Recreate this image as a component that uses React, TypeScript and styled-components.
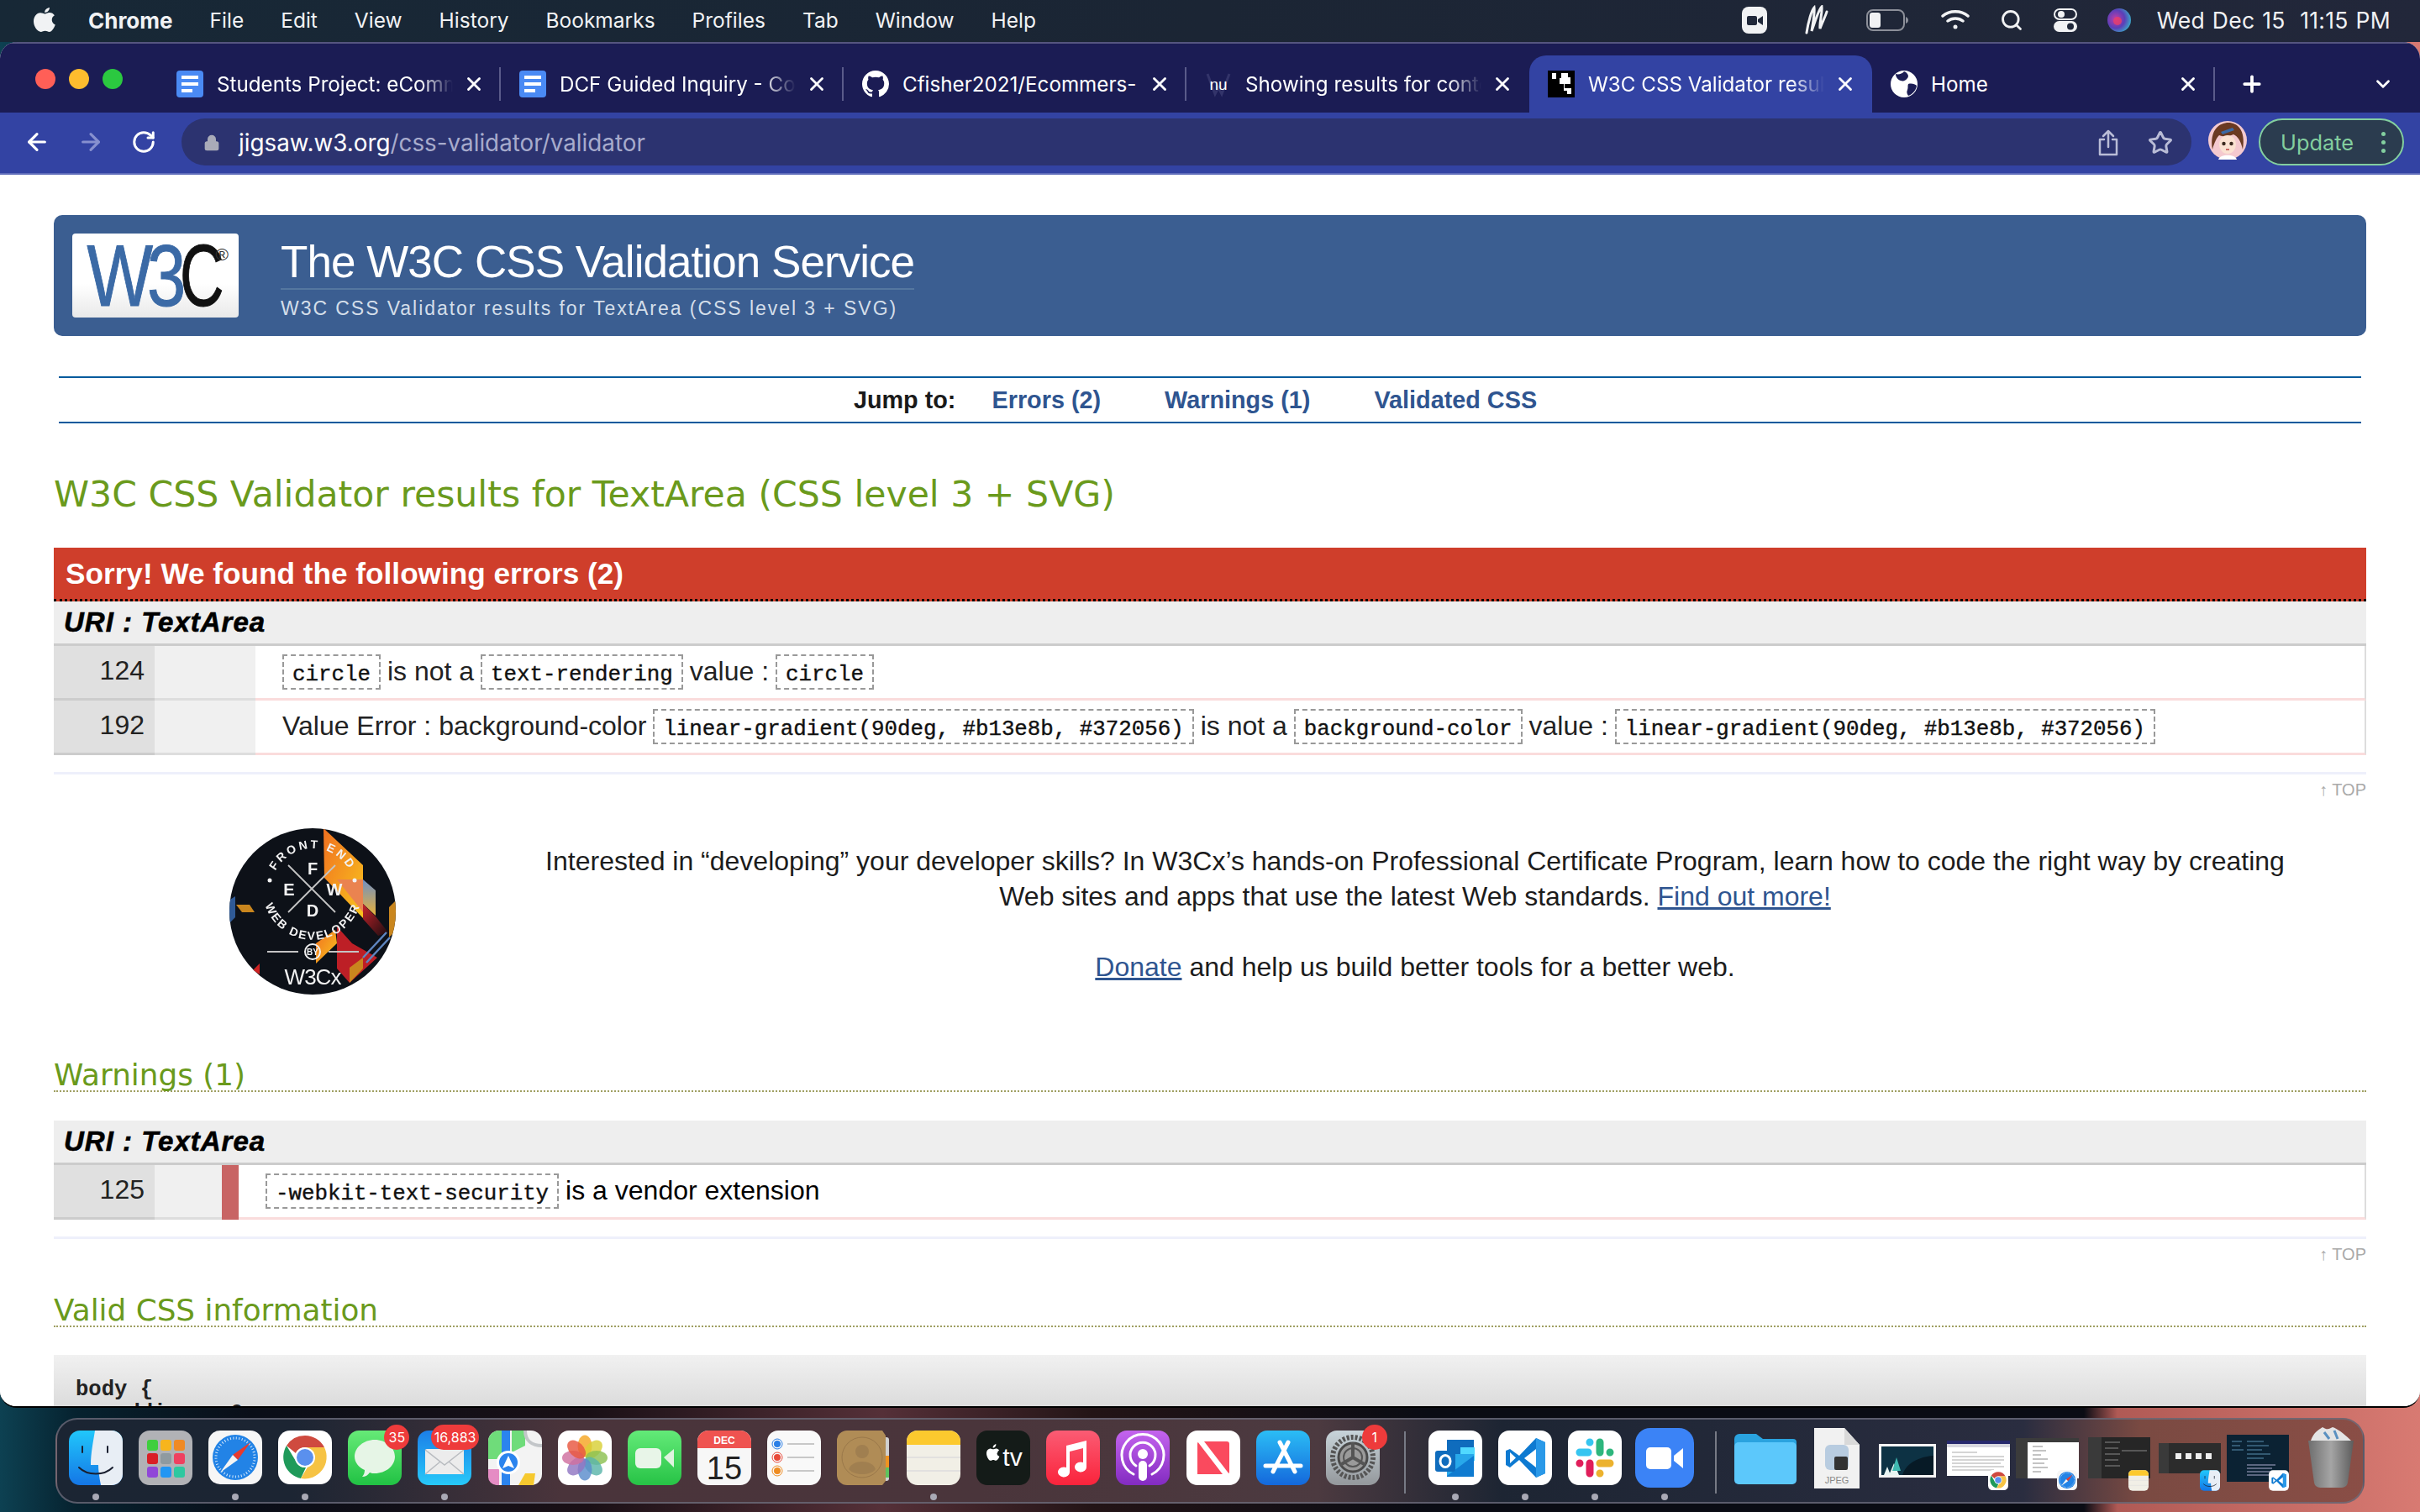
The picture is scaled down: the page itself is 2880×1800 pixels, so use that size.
import React from "react";
import styled, { createGlobalStyle } from "styled-components";
import { ArrowLeft, ArrowRight, RotateCw, Lock, Star, Plus, ChevronDown, X, Search } from "lucide-react";

const Global = createGlobalStyle`
  html, body { margin: 0; padding: 0; background: #111; }
  body { font-family: "Liberation Sans", Arial, sans-serif; }
  * { box-sizing: border-box; }
`;

const Root = styled.div`
  width: 2880px;
  height: 1800px;
  overflow: hidden;
  display: flex;
  flex-direction: column;
  background:
    linear-gradient(90deg, #0d4152 0, #06222f 90px, #0a0e18 300px, #1a1016 700px, #553038 1050px, #231416 1300px, #0a0c14 1700px, #0a0c14 2480px, #b05a55 2520px, #d87a72 2880px);
`;

/* menu bar */
const MenuBar = styled.div`
  height: 50px;
  flex: none;
  display: flex;
  align-items: center;
  padding: 0 35px 2px 39px;
  color: #f1f2f4;
  font-family: Inter, sans-serif;
  font-size: 24.5px;
  background: linear-gradient(90deg, #172836, #1b2534 50%, #22273a);
`;
const MenuItems = styled.div`
  display: flex;
  align-items: center;
  gap: 44px;
  svg { margin-right: -6px; }
`;
const MenuName = styled.span<{ $bold?: boolean }>`
  font-weight: ${p => (p.$bold ? 700 : 400)};
  font-size: ${p => (p.$bold ? "26px" : "inherit")};
`;
const Status = styled.div`
  margin-left: auto;
  display: flex;
  align-items: center;
  gap: 36px;
  & > svg:nth-child(-n + 2) { margin-right: 9px; }
  & > svg:nth-child(3) { margin-right: 3px; }
`;
const Clock = styled.span`
  white-space: pre;
  margin-left: -5px;
  font-size: 26.5px;
  letter-spacing: .3px;
  word-spacing: 1px;
`;

/* browser window */
const Window = styled.div`
  height: 1626px;
  flex: none;
  border-radius: 20px;
  overflow: hidden;
  display: flex;
  flex-direction: column;
  background: #fff;
  border-bottom: 2px solid #000;
`;
const TabStrip = styled.div`
  height: 84px;
  flex: none;
  display: flex;
  align-items: flex-end;
  background: #1b1c54;
  border-top: 2px solid #55557f;
  padding-left: 42px;
`;
const Lights = styled.div`
  display: flex;
  gap: 16px;
  width: 146px;
  flex: none;
  align-self: flex-start;
  padding-top: 30px;
`;
const Light = styled.i<{ $c: string }>`
  width: 24px;
  height: 24px;
  border-radius: 50%;
  background: ${p => p.$c};
`;
const Tab = styled.div<{ $active?: boolean; $sep?: boolean }>`
  width: 408px;
  height: 68px;
  flex: none;
  display: flex;
  align-items: center;
  padding: 0 19px 0 22px;
  gap: 16px;
  color: #fff;
  font-family: Inter, sans-serif;
  font-size: 24.2px;
  position: relative;
  border-radius: 20px 20px 0 0;
  background: ${p => (p.$active ? "#3343a3" : "transparent")};
  ${p =>
    p.$sep
      ? `&::after { content: ""; position: absolute; right: 0; top: 14px; height: 40px; width: 2px; background: #5a5b8a; }`
      : ""}
`;
const TabTitle = styled.span<{ $fade?: boolean }>`
  flex: 1;
  min-width: 0;
  margin-right: -4px;
  white-space: nowrap;
  overflow: hidden;
  ${p => (p.$fade ? "-webkit-mask-image: linear-gradient(90deg, #000 86%, transparent 100%);" : "")}
`;
const NewTab = styled.div`
  display: flex;
  align-items: center;
  height: 68px;
  padding-left: 29px;
  color: #fff;
`;
const TabMenu = styled.div`
  margin-left: auto;
  height: 68px;
  padding-right: 31px;
  display: flex;
  align-items: center;
  color: #fff;
`;
const Toolbar = styled.div`
  height: 74px;
  flex: none;
  display: flex;
  align-items: center;
  padding: 0 18px 2px 28px;
  background: #3343a3;
  border-bottom: 2px solid #5f6cba;
`;
const NavButtons = styled.div`
  display: flex;
  align-items: center;
  gap: 32px;
  width: 188px;
  flex: none;
`;
const Omnibox = styled.div`
  width: 2392px;
  height: 56px;
  flex: none;
  display: flex;
  align-items: center;
  padding: 2px 22px 0 26px;
  border-radius: 28px;
  background: #2c3370;
  font-family: Inter, sans-serif;
  font-size: 27.8px;
  color: #a7abcc;
`;
const Host = styled.span`
  margin-left: 22px;
  color: #fff;
`;
const OmniIcons = styled.div`
  margin-left: auto;
  display: flex;
  align-items: center;
  gap: 35px;
  color: #b9bcd6;
`;
const Avatar = styled.div`
  margin-left: 20px;
  flex: none;
`;
const UpdatePill = styled.div`
  margin-left: 14px;
  width: 173px;
  height: 56px;
  flex: none;
  display: flex;
  align-items: center;
  justify-content: space-between;
  padding: 0 20px 0 24px;
  border-radius: 28px;
  border: 2px solid #83cf9f;
  background: #2b3c4f;
  color: #83cf9f;
  font-family: Inter, sans-serif;
  font-size: 25.4px;
`;
const Kebab = styled.span`
  display: flex;
  flex-direction: column;
  gap: 5px;
  i { width: 5px; height: 5px; border-radius: 50%; background: #83cf9f; }
`;

/* page */
const Page = styled.div`
  flex: 1;
  min-height: 0;
  overflow: hidden;
  padding: 48px 64px 0;
  background: #fff;
  color: #000;
`;
const Banner = styled.div`
  height: 144px;
  display: flex;
  align-items: center;
  padding-left: 22px;
  gap: 50px;
  border-radius: 10px;
  background: #3b5e91;
`;
const Logo = styled.div`
  width: 198px;
  height: 100px;
  flex: none;
  display: flex;
  align-items: center;
  justify-content: center;
  border-radius: 4px;
  background: linear-gradient(#fff, #fff 60%, #e9e9e9);
  font-size: 104px;
  line-height: 1;
  letter-spacing: -9px;
  position: relative;
  padding-right: 14px;
  overflow: hidden;
  -webkit-text-stroke: 1px currentColor;
`;
const LogoBlue = styled.span`
  color: #3b6aa6;
  display: inline-block;
  transform: scaleX(.8);
  transform-origin: right;
`;
const LogoBlack = styled.span`
  color: #111;
  display: inline-block;
  transform: scaleX(.7);
  transform-origin: left;
`;
const LogoMark = styled.sup`
  position: absolute;
  right: 12px;
  top: 14px;
  font-size: 21px;
  letter-spacing: 0;
  color: #333;
  line-height: 1;
  -webkit-text-stroke: 0;
`;
const BannerText = styled.div`
  display: flex;
  flex-direction: column;
`;
const BannerTitle = styled.div`
  font-size: 53px;
  line-height: 62px;
  letter-spacing: -.95px;
  color: #fff;
  border-bottom: 2px solid #55779f;
  padding-top: 8px;
`;
const BannerSub = styled.div`
  font-size: 23px;
  line-height: 32px;
  letter-spacing: 1.95px;
  color: #d4deea;
  padding-top: 6px;
`;
const JumpNav = styled.div`
  margin: 48px 6px 0;
  height: 56px;
  display: flex;
  align-items: center;
  justify-content: center;
  gap: 76px;
  border-top: 2px solid #005a9c;
  border-bottom: 2px solid #005a9c;
  font-size: 28.8px;
  font-weight: 700;
  padding-right: 35px;
`;
const JumpLabel = styled.span`
  color: #1a1a1a;
  margin-right: -33px;
`;
const JumpLink = styled.span`
  color: #2f5590;
`;
const H2 = styled.h2`
  margin: 54px 0 0;
  height: 60px;
  font-family: "DejaVu Sans", Verdana, sans-serif;
  font-size: 42.6px;
  line-height: 61px;
  font-weight: 400;
  color: #6a9a1c;
`;
const ErrorBar = styled.div`
  margin-top: 34px;
  height: 64px;
  padding-left: 14px;
  display: flex;
  align-items: center;
  background: #cf3e2b;
  border-bottom: 3px dotted #000;
  color: #fff;
  font-size: 35.2px;
  font-weight: 700;
`;
const UriRow = styled.div<{ $top?: number }>`
  margin-top: ${p => p.$top ?? 0}px;
  height: 53px;
  display: flex;
  align-items: center;
  padding-left: 12px;
  background: #eee;
  border-bottom: 3px solid #ccc;
  font-size: 33px;
  letter-spacing: 1px;
  font-weight: 700;
  font-style: italic;
  -webkit-text-stroke: .6px #000;
`;
const Row = styled.div<{ $warn?: boolean }>`
  display: grid;
  grid-template-columns: ${p => (p.$warn ? "120px 80px 20px 1fr" : "120px 120px 1fr")};
  height: 65px;
  font-size: 32px;
`;
const LineNo = styled.div`
  background: #e0e0e0;
  border-bottom: 3px solid #ccc;
  color: #222;
  text-align: right;
  padding-right: 12px;
  line-height: 58px;
`;
const Gap = styled.div`
  background: #f0f0f0;
  border-bottom: 3px solid #ddd;
`;
const Flag = styled.div`
  background: #c86464;
`;
const Msg = styled.div<{ $warn?: boolean }>`
  display: flex;
  align-items: center;
  gap: 8px;
  white-space: pre;
  padding-left: 32px;
  padding-bottom: 1px;
  border-bottom: 3px solid #fadcdc;
  border-right: 2px solid #ddd;
  color: ${p => (p.$warn ? "#000" : "#222")};
`;
const Code = styled.code`
  display: inline-block;
  height: 42px;
  padding: 0 10px;
  border: 2px dashed #999;
  font-family: "Liberation Mono", "Courier New", monospace;
  font-size: 25.8px;
  line-height: 46px;
  color: #111;
  font-weight: 400;
  -webkit-text-stroke: .4px #111;
`;
const Rule = styled.div`
  margin-top: 20px;
  height: 3px;
  background: #eef0fb;
`;
const Top = styled.div`
  margin-top: 3px;
  height: 30px;
  text-align: right;
  font-size: 20px;
  line-height: 30px;
  color: #aaa;
`;
const Promo = styled.div`
  margin-top: 31px;
  height: 230px;
  display: flex;
`;
const BadgeBox = styled.div`
  width: 200px;
  flex: none;
  margin-left: 208px;
`;
const PromoText = styled.div`
  width: 2100px;
  flex: none;
  margin-left: 162px;
  padding-top: 18px;
  text-align: center;
  font-size: 32px;
  line-height: 42px;
  color: #1c1c1c;
`;
const Blank = styled.div`
  height: 42px;
`;
const A = styled.span`
  color: #2f5590;
  text-decoration: underline;
`;
const H3 = styled.h3<{ $top: number }>`
  margin: ${p => p.$top}px 0 0;
  height: 41px;
  font-family: "DejaVu Sans", Verdana, sans-serif;
  font-size: 35.8px;
  line-height: 42px;
  font-weight: 400;
  color: #6a9a1c;
  border-bottom: 2px dotted #9f9f62;
`;
const Listing = styled.pre`
  margin: 33px 0 0;
  height: 100px;
  padding: 28px 26px;
  background: linear-gradient(#f1f1f1, #dcdcdc 60px);
  font-family: "Liberation Mono", monospace;
  font-size: 25.6px;
  line-height: 28px;
  color: #222;
  font-weight: 700;
`;

/* dock */
const DockArea = styled.div`
  flex: 1;
  padding: 12px 66px 10px;
  min-height: 0;
`;
const Dock = styled.div`
  height: 102px;
  width: 2748px;
  display: flex;
  align-items: flex-start;
  padding: 12px 0 0 14px;
  gap: 19.1px;
  border-radius: 26px;
  border: 2px solid rgba(110,110,125,.75);
  background: linear-gradient(90deg, #1b2533 0, #1c2533 280px, #4a343b 600px, #4a353b 1100px, #4c3a40 1500px, #1d2533 1720px, #2a2d40 2340px, #7a4a42 2480px, #8a4e46 2748px);
`;
const Slot = styled.div<{ $w: number; $mr?: number }>`
  width: ${p => p.$w}px;
  height: 86px;
  flex: none;
  position: relative;
  margin-right: ${p => p.$mr ?? 0}px;
`;
const Lift = styled.div<{ $mt?: number }>`
  margin-top: ${p => p.$mt ?? 1}px;
`;
const ThumbBadge = styled.div`
  position: absolute;
  right: 2px;
  top: 48px;
`;
const Dot = styled.i`
  position: absolute;
  left: 50%;
  margin-left: -4px;
  top: 76px;
  width: 8px;
  height: 8px;
  border-radius: 50%;
  background: #a9a9b5;
`;
const Count = styled.span`
  position: absolute;
  right: -9px;
  top: -6px;
  height: 30px;
  min-width: 30px;
  padding: 0 4px;
  border-radius: 15px;
  background: #ee3b3b;
  color: #fff;
  font-family: Inter, sans-serif;
  font-size: 16px;
  line-height: 30px;
  text-align: center;
`;
const Divider = styled.div<{ $ml: number; $mr: number }>`
  width: 2px;
  height: 74px;
  flex: none;
  background: #777a85;
  margin: 2px ${p => p.$mr}px 0 ${p => p.$ml}px;
`;

const Ico = ({ w = 64, h = 65, vb = "0 0 64 65", children }: { w?: number; h?: number; vb?: string; children: React.ReactNode }) => (
  <svg width={w} height={h} viewBox={vb} style={{ display: "block" }}>{children}</svg>
);

const Apple = () => (
  <svg width="28" height="32" viewBox="0 0 28 32">
    <path fill="#f1f2f4" d="M20 1c0 3-2.6 6-5.800 6C14 4 16.800 1.300 20 1zM14.400 8.400c1.500 0 3-1.400 5.500-1.400 2.500 0 4.700 1.200 6 3.300-4.700 2.700-3.900 9.300.9 11.100-1.200 3.300-4.200 8.600-7.100 8.600-1.900 0-2.900-1.200-5-1.200s-3.200 1.200-5 1.200C5.600 30 1 23.600 1 17.600 1 11.700 4.700 7.300 9 7.300c2.300 0 4 1.100 5.400 1.100z" />
  </svg>
);
const DocFav = () => (
  <svg width="32" height="32" viewBox="0 0 32 32">
    <rect width="32" height="32" rx="4" fill="#4a8af4" />
    <rect x="6" y="6" width="20" height="4" fill="#fff" /><rect x="6" y="14" width="20" height="4" fill="#fff" /><rect x="6" y="22" width="13" height="4" fill="#fff" />
  </svg>
);
const GithubFav = () => (
  <svg width="32" height="32" viewBox="0 0 16 16">
    <path fill="#fff" d="M8 0C3.580 0 0 3.580 0 8c0 3.540 2.290 6.530 5.470 7.590.4.070.55-.17.55-.38 0-.19-.01-.82-.01-1.490-2.010.37-2.530-.49-2.690-.94-.09-.23-.48-.94-.82-1.130-.28-.15-.68-.52-.01-.53.63-.01 1.080.58 1.230.82.720 1.210 1.870.870 2.330.660.070-.520.280-.870.510-1.070-1.780-.2-3.640-.890-3.640-3.950 0-.870.310-1.590.820-2.150-.080-.2-.360-1.020.080-2.120 0 0 .670-.210 2.200.820a7.420 7.420 0 0 1 4 0c1.530-1.040 2.200-.820 2.200-.820.440 1.100.160 1.920.080 2.120.510.560.820 1.270.820 2.150 0 3.070-1.870 3.750-3.650 3.950.290.250.540.730.540 1.480 0 1.070-.010 1.930-.010 2.200 0 .210.150.460.550.380A8.010 8.010 0 0 0 16 8c0-4.420-3.580-8-8-8z" />
  </svg>
);
const NuFav = () => (
  <svg width="32" height="32" viewBox="0 0 32 32">
    <path d="M3 4l9 24 4-8 4 8 9-24" fill="none" stroke="#33346a" strokeWidth="3" />
    <text x="16" y="23" fontFamily="Liberation Sans" fontSize="19" fill="#fff" textAnchor="middle">nu</text>
  </svg>
);
const W3Fav = () => (
  <svg width="32" height="32" viewBox="0 0 32 32" shapeRendering="crispEdges">
    <rect width="32" height="32" fill="#000" />
    <path fill="#fff" d="M5 3h5v7h-5zM16 3h8v5h3v8h-7v5h8v7h-5v-4h-4v-8h-5v-7h2z" />
  </svg>
);
const HomeFav = () => (
  <svg width="32" height="32" viewBox="0 0 32 32">
    <circle cx="16" cy="16" r="16" fill="#fff" />
    <path d="M16 1c-2 3-7 4-10 3 0 3 2 7 6 8 3 1 6 0 8-3 2-2 1-6-4-8zM21 16c4-1 8 0 10 2-1 6-5 10-10 12-2-3-2-5-1-7 1-3 0-5 1-7z" fill="#1b1c54" />
  </svg>
);

const ZoomStatus = () => (
  <svg width="30" height="32" viewBox="0 0 30 32">
    <rect width="30" height="32" rx="8" fill="#f1f2f4" />
    <rect x="6" y="11" width="12" height="11" rx="2" fill="#20283a" /><path d="M19 15l6-4v11l-6-4z" fill="#20283a" />
  </svg>
);
const ScribbleStatus = () => (
  <svg width="28" height="36" viewBox="0 0 28 36" fill="none" stroke="#f1f2f4" strokeWidth="3" strokeLinecap="round">
    <path d="M2 33C4 20 8 6 11 3c1 8-2 20-3 28C12 20 16 6 20 2c1 8-3 18-2 26C20 22 25 12 26 8" />
  </svg>
);
const BatteryStatus = () => (
  <svg width="50" height="26" viewBox="0 0 50 26">
    <rect x="1" y="1" width="44" height="24" rx="7" fill="none" stroke="#8c8f99" strokeWidth="2" />
    <rect x="4" y="4" width="13" height="18" rx="3" fill="#f1f2f4" />
    <path d="M47 9c2 1 3 2 3 4s-1 3-3 4z" fill="#8c8f99" />
  </svg>
);
const WifiStatus = () => (
  <svg width="34" height="26" viewBox="0 0 34 26" fill="none" stroke="#f1f2f4" strokeWidth="3.500" strokeLinecap="round">
    <path d="M2 8c8-7 22-7 30 0M8 14c5-4 13-4 18 0" /><circle cx="17" cy="21" r="2.500" fill="#f1f2f4" stroke="none" />
  </svg>
);
const ControlStatus = () => (
  <svg width="28" height="28" viewBox="0 0 28 28">
    <rect x="1" y="1" width="26" height="12" rx="6" fill="none" stroke="#f1f2f4" strokeWidth="2" /><circle cx="9" cy="7" r="4" fill="#f1f2f4" />
    <rect x="0" y="15" width="28" height="13" rx="6.500" fill="#f1f2f4" /><circle cx="20" cy="21.500" r="4" fill="#20283a" />
  </svg>
);
const SiriStatus = () => (
  <svg width="28" height="28" viewBox="0 0 28 28">
    <defs>
      <radialGradient id="siri" cx=".35" cy=".45" r=".7"><stop offset="0" stopColor="#c23ea8" /><stop offset=".55" stopColor="#5a3fb8" /><stop offset="1" stopColor="#36b6c9" /></radialGradient>
    </defs>
    <circle cx="14" cy="14" r="14" fill="url(#siri)" />
    <circle cx="12" cy="15" r="5" fill="#ea3e6a" opacity=".8" />
  </svg>
);
const ShareIcon = () => (
  <svg width="24" height="32" viewBox="0 0 24 32" fill="none" stroke="#b9bcd6" strokeWidth="2.500" strokeLinecap="round" strokeLinejoin="round">
    <path d="M7 12H2v18h20V12h-5M12 21V2M6 8l6-6 6 6" />
  </svg>
);
const Face = () => (
  <svg width="46" height="46" viewBox="0 0 46 46">
    <circle cx="23" cy="23" r="23" fill="#f4c9cf" />
    <path d="M5 34C1 10 14 2 24 2s21 8 17 32c-2-10-6-16-11-18-6 3-13 3-17 1-3 3-6 9-8 17z" fill="#6b3a22" />
    <path d="M15 13l14-5 2 3-14 5z" fill="#3b6aa6" />
    <ellipse cx="23" cy="28" rx="10" ry="11" fill="#fbe2d2" />
    <circle cx="18.500" cy="27" r="2.200" fill="#3b2a20" /><circle cx="27.500" cy="27" r="2.200" fill="#3b2a20" />
    <path d="M12 46c2-7 20-7 22 0z" fill="#fff" />
    <path d="M21 34h4" stroke="#b44" strokeWidth="1.500" />
  </svg>
);

/* w3cx front-end badge */
const FrontEndBadge = () => (
  <svg width="200" height="198" viewBox="0 0 200 198" style={{ display: "block", filter: "blur(.6px)" }}>
    <defs>
      <clipPath id="disc"><circle cx="100" cy="99" r="99" /></clipPath>
      <linearGradient id="org" x1="0" y1="0" x2="1" y2="1"><stop offset="0" stopColor="#f07020" /><stop offset="1" stopColor="#f9c41e" /></linearGradient>
      <linearGradient id="blu" x1="0" y1="0" x2="0" y2="1"><stop offset="0" stopColor="#6f8fc4" /><stop offset="1" stopColor="#e8b23a" /></linearGradient>
      <linearGradient id="dkr" x1="0" y1="0" x2="1" y2="1"><stop offset="0" stopColor="#c5232a" /><stop offset="1" stopColor="#1a0d10" /></linearGradient>
      <path id="arcTop" d="M52 60A50 50 0 0 1 148 60" />
      <path id="arcBot" d="M42 63A59 59 0 1 0 158 63" />
    </defs>
    <g clipPath="url(#disc)">
      <rect width="200" height="198" fill="#0d1118" />
      <path d="M113 0l47 44v63l-46-48z" fill="url(#org)" />
      <path d="M129 61h31v39z" fill="#ea8350" />
      <path d="M160 61l15 13v30l-15-14z" fill="url(#blu)" />
      <path d="M160 90l15 15 15 19-12 4-18-20z" fill="url(#dkr)" />
      <path d="M129 117l18 20 30 17-33 30-15-17z" fill="#bd1f26" />
      <path d="M104 161v-24l23-16 2 16z" fill="url(#org)" />
      <path d="M144 166l16-12v13l-16 17z" fill="#c9861e" />
      <path d="M160 154l28-30M164 160l28-30" stroke="#5f86c0" strokeWidth="2.500" />
      <path d="M191 94l8-8v36l-8 8z" fill="#c9861e" />
      <path d="M0 86l8-5v25l-8 8z" fill="#2f5a96" />
      <path d="M9 91h16l6 9H16z" fill="#c9861e" />
      <path d="M37 161l-8 8 8 5z" fill="#c22" />
      <g stroke="#c4c4c4" strokeWidth="1.800"><path d="M71 44l56 56M127 44l-56 56" /><path d="M46 147h37M119 147h36" /></g>
      <circle cx="100" cy="147" r="9" fill="none" stroke="#eee" strokeWidth="2" />
      <circle cx="49" cy="62" r="2.500" fill="#f2f2f2" /><circle cx="150" cy="62" r="2.500" fill="#f2f2f2" />
      <g fontFamily="Liberation Sans" fontWeight="700" fill="#f2f2f2" textAnchor="middle">
        <text x="100" y="55" fontSize="20">F</text>
        <text x="72" y="80" fontSize="20">E</text>
        <text x="126" y="80" fontSize="20">W</text>
        <text x="100" y="105" fontSize="20">D</text>
        <text fontSize="14" letterSpacing="3"><textPath href="#arcTop" startOffset="50%">FRONT END</textPath></text>
        <text fontSize="14" letterSpacing="2"><textPath href="#arcBot" startOffset="50%">WEB DEVELOPER</textPath></text>
        <text x="100" y="151" fontSize="10">BY</text>
        <text x="100" y="186" fontSize="26" letterSpacing="-1" fontWeight="400">W3Cx</text>
      </g>
    </g>
  </svg>
);

/* dock icons */
const Finder = ({ size = 64 }: { size?: number }) => (
  <Ico w={size} h={size + 1}>
    <defs><linearGradient id="fnd" x1="0" y1="0" x2="0" y2="1"><stop offset="0" stopColor="#21c7fb" /><stop offset="1" stopColor="#1476e6" /></linearGradient></defs>
    <rect width="64" height="65" rx="13" fill="url(#fnd)" />
    <path d="M31 0h20a13 13 0 0 1 13 13v39a13 13 0 0 1-13 13H38c-2-10-3-18-3-24h-9c0-14 3-28 5-41z" fill="#e8eef5" />
    <path d="M12 44c10 10 30 10 40 0" fill="none" stroke="#1a2030" strokeWidth="2" strokeLinecap="round" />
    <path d="M16 19v7M46 19v7" stroke="#1a2030" strokeWidth="2" strokeLinecap="round" />
  </Ico>
);
const Launchpad = () => {
  const colors = ["#3ecf3e", "#f7b51d", "#f08a24", "#d91f26", "#8f9aa0", "#ef4060", "#9047d8", "#2296f3", "#2ec8a0"];
  return (
    <Ico>
      <rect width="64" height="65" rx="13" fill="#b1b2b6" />
      {colors.map((c, i) => (
        <rect key={c} x={10 + (i % 3) * 16} y={11 + Math.floor(i / 3) * 16} width="13" height="13" rx="3" fill={c} />
      ))}
    </Ico>
  );
};
const Safari = ({ size = 64 }: { size?: number }) => (
  <Ico w={size} h={size} vb="0 0 64 64">
    <rect width="64" height="64" rx="14" fill="#f6f6f6" />
    <circle cx="32" cy="32" r="27" fill="#2283e6" />
    <circle cx="32" cy="32" r="23" fill="none" stroke="#d6e8fa" strokeWidth="3" strokeDasharray="1 2.500" />
    <path d="M50 14L29 29l6 6z" fill="#e8392e" /><path d="M14 50l21-15-6-6z" fill="#f4f4f4" />
  </Ico>
);
const Chrome = ({ size = 64 }: { size?: number }) => (
  <Ico w={size} h={size} vb="0 0 64 64">
    <rect width="64" height="64" rx="14" fill="#fff" />
    <path d="M32 6a26 26 0 0 1 23 14H32a12 12 0 0 0-11 7L10 18A26 26 0 0 1 32 6z" fill="#cf4a3f" />
    <path d="M10 18l12 20a12 12 0 0 0 11 6L27 57A26 26 0 0 1 10 18z" fill="#1f9a5a" />
    <path d="M55 20a26 26 0 0 1-28 37l12-20a12 12 0 0 0-7-17z" fill="#f6c344" />
    <circle cx="32" cy="32" r="12" fill="#fff" /><circle cx="32" cy="32" r="10" fill="#5a90ee" />
  </Ico>
);
const Messages = () => (
  <Ico>
    <defs><linearGradient id="msg" x1="0" y1="0" x2="0" y2="1"><stop offset="0" stopColor="#66ea77" /><stop offset="1" stopColor="#21c244" /></linearGradient></defs>
    <rect width="64" height="65" rx="13" fill="url(#msg)" />
    <path d="M32 11c13 0 24 9 24 20S45 51 32 51c-2 0-4 0-6-1-2 3-5 5-9 5 2-2 3-5 3-8C13 44 8 38 8 31c0-11 11-20 24-20z" fill="#e6f5e6" />
  </Ico>
);
const Mail = () => (
  <Ico>
    <defs><linearGradient id="ml" x1="0" y1="0" x2="0" y2="1"><stop offset="0" stopColor="#1c7fe8" /><stop offset="1" stopColor="#27c9f9" /></linearGradient></defs>
    <rect width="64" height="65" rx="13" fill="url(#ml)" />
    <rect x="9" y="22" width="46" height="30" rx="2" fill="#ececec" />
    <path d="M9 23l23 18 23-18M9 52l18-15M55 52L37 37" fill="none" stroke="#b9bcc0" strokeWidth="1.500" />
  </Ico>
);
const Maps = () => (
  <Ico>
    <rect width="64" height="65" rx="13" fill="#f3f3f3" />
    <path d="M0 13A13 13 0 0 1 13 0h3v34H0z" fill="#6fdc7a" />
    <path d="M28 0h16v18l-16 8z" fill="#6fdc7a" />
    <path d="M0 46h13v19H10a10 10 0 0 1-10-10z" fill="#e58cc4" />
    <path d="M36 65l8-14h12l-2 14z" fill="#f6c92f" />
    <rect x="16" y="0" width="10" height="65" fill="#2b84ee" />
    <path d="M44 0c0 12 8 18 20 18" fill="none" stroke="#c3c6c9" strokeWidth="4" />
    <circle cx="24" cy="38" r="14" fill="#fff" /><circle cx="24" cy="38" r="11" fill="#2b84ee" />
    <path d="M24 30l7 15-7-3-7 3z" fill="#fff" />
  </Ico>
);
const Photos = () => {
  const petals = ["#f5a623", "#d8cf36", "#8cc152", "#5ab4a9", "#5a8ccc", "#9076c2", "#cf6f9f", "#e8573f"];
  return (
    <Ico>
      <rect width="64" height="65" rx="13" fill="#fff" />
      {petals.map((c, i) => (
        <ellipse key={c} cx="32" cy="18.500" rx="8.500" ry="13" fill={c} opacity=".82" transform={`rotate(${i * 45} 32 32.500)`} />
      ))}
    </Ico>
  );
};
const FaceTime = () => (
  <Ico>
    <defs><linearGradient id="ft" x1="0" y1="0" x2="0" y2="1"><stop offset="0" stopColor="#63ea78" /><stop offset="1" stopColor="#27c346" /></linearGradient></defs>
    <rect width="64" height="65" rx="13" fill="url(#ft)" />
    <rect x="9" y="21" width="31" height="24" rx="6" fill="#e8f5e8" /><path d="M43 32l12-10v22z" fill="#dff3df" />
  </Ico>
);
const Calendar = () => (
  <Ico>
    <rect width="64" height="65" rx="13" fill="#f7f7f7" />
    <path d="M0 21V13A13 13 0 0 1 13 0h38a13 13 0 0 1 13 13v8z" fill="#ef5350" />
    <text x="32" y="16" textAnchor="middle" fontFamily="Liberation Sans" fontWeight="700" fontSize="12" fill="#fff">DEC</text>
    <text x="32" y="58" textAnchor="middle" fontFamily="Liberation Sans" fontSize="38" fill="#222">15</text>
  </Ico>
);
const Reminders = () => (
  <Ico>
    <rect width="64" height="65" rx="13" fill="#f9f9f9" />
    {["#2b7fe6", "#e84a3a", "#ee8c22"].map((c, i) => (
      <g key={c}>
        <circle cx="12" cy={16 + i * 16} r="4" fill={c} /><circle cx="12" cy={16 + i * 16} r="6" fill="none" stroke={c} strokeWidth="1" />
        <rect x="24" y={15 + i * 16} width="32" height="2" fill="#c8c8c8" />
      </g>
    ))}
  </Ico>
);
const Contacts = () => (
  <Ico>
    <rect x="50" y="8" width="12" height="52" rx="3" fill="#d0d0d0" /><rect x="54" y="30" width="8" height="14" fill="#ef9320" /><rect x="54" y="44" width="8" height="12" fill="#5ec35e" />
    <path d="M12 0h42l4 6v54l-4 5H12A12 12 0 0 1 0 53V12A12 12 0 0 1 12 0z" fill="#b08c56" />
    <circle cx="30" cy="32" r="24" fill="none" stroke="#9a784a" strokeWidth="1" />
    <circle cx="30" cy="25" r="8" fill="#a07f50" /><path d="M14 46c4-12 28-12 32 0-6 8-26 8-32 0z" fill="#a07f50" />
  </Ico>
);
const Notes = ({ size = 64 }: { size?: number }) => (
  <Ico w={size} h={size + 1} vb="0 0 64 65">
    <rect width="64" height="65" rx="13" fill="#f1efe6" />
    <path d="M0 17v-4A13 13 0 0 1 13 0h38a13 13 0 0 1 13 13v4z" fill="#fcc92e" />
    <path d="M0 32h64M0 48h64" stroke="#ddd" strokeWidth="1.500" />
  </Ico>
);
const TV = () => (
  <Ico>
    <rect width="64" height="65" rx="13" fill="#141b18" />
    <path fill="#fff" d="M25 27c-.1-2.400 2-3.500 2.100-3.600-1.100-1.700-2.900-1.900-3.500-2-1.500-.1-2.900.9-3.700.9s-1.900-.9-3.200-.9c-1.600 0-3.100 1-3.900 2.400-1.700 2.900-.4 7.300 1.200 9.600.8 1.200 1.800 2.400 3 2.400s1.700-.8 3.100-.8 1.900.8 3.100.8 2.100-1.100 2.900-2.300c.9-1.300 1.300-2.600 1.300-2.700-.1 0-2.900-1.100-2.900-3.800zM22.400 19.200c.7-.8 1.100-1.900 1-3-1 0-2.100.6-2.800 1.500-.6.700-1.100 1.900-1 2.900 1.100.1 2.200-.5 2.800-1.400z" />
    <text x="43" y="42" textAnchor="middle" fontFamily="Liberation Sans" fontSize="30" fill="#fff">tv</text>
  </Ico>
);
const Music = () => (
  <Ico>
    <defs><linearGradient id="mu" x1="0" y1="0" x2="0" y2="1"><stop offset="0" stopColor="#fb5c74" /><stop offset="1" stopColor="#fa233b" /></linearGradient></defs>
    <rect width="64" height="65" rx="13" fill="url(#mu)" />
    <path d="M24 18l24-6v31a7 6 0 1 1-4-5V21l-16 4v24a7 6 0 1 1-4-5z" fill="#fff" />
  </Ico>
);
const Podcasts = () => (
  <Ico>
    <defs><linearGradient id="pod" x1="0" y1="0" x2="0" y2="1"><stop offset="0" stopColor="#c464ee" /><stop offset="1" stopColor="#832bc1" /></linearGradient></defs>
    <rect width="64" height="65" rx="13" fill="url(#pod)" />
    <g fill="none" stroke="#fff" strokeWidth="3" strokeLinecap="round">
      <path d="M21 52a25 25 0 1 1 22 0" /><path d="M24 42a15 15 0 1 1 16 0" />
    </g>
    <circle cx="32" cy="28" r="6" fill="#fff" /><rect x="27" y="36" width="10" height="24" rx="5" fill="#fff" />
  </Ico>
);
const News = () => (
  <Ico>
    <rect width="64" height="65" rx="13" fill="#fff" />
    <rect x="13" y="13" width="38" height="39" rx="3" fill="#fa4a5e" />
    <path d="M13 13h8l30 39h-8z" fill="#fff" />
    <path d="M13 17l20 35H13z" fill="#fa4a5e" />
  </Ico>
);
const AppStore = () => (
  <Ico>
    <defs><linearGradient id="as" x1="0" y1="0" x2="0" y2="1"><stop offset="0" stopColor="#2bbdf5" /><stop offset="1" stopColor="#1468dc" /></linearGradient></defs>
    <rect width="64" height="65" rx="13" fill="url(#as)" />
    <path d="M28 14l18 35M38 14L20 49M11 42h42" stroke="#fff" strokeWidth="5" strokeLinecap="round" />
  </Ico>
);
const Settings = () => (
  <Ico>
    <defs><linearGradient id="set" x1="0" y1="0" x2="0" y2="1"><stop offset="0" stopColor="#c8d4da" /><stop offset="1" stopColor="#94989c" /></linearGradient></defs>
    <rect width="64" height="65" rx="13" fill="url(#set)" />
    <circle cx="32" cy="32" r="24" fill="none" stroke="#555" strokeWidth="6" strokeDasharray="3 2" />
    <circle cx="32" cy="32" r="17" fill="#9a9a9a" stroke="#4a4a4a" strokeWidth="3" />
    <circle cx="32" cy="32" r="11" fill="none" stroke="#555" strokeWidth="2" />
    <path d="M32 32V14M32 32l15 9M32 32l-15 9" stroke="#555" strokeWidth="4" />
  </Ico>
);
const Outlook = () => (
  <Ico>
    <rect width="64" height="65" rx="13" fill="#fff" />
    <rect x="22" y="11" width="32" height="17" fill="#0f6cbd" /><rect x="38" y="20" width="17" height="16" fill="#50d9ff" />
    <rect x="22" y="28" width="32" height="27" fill="#28a8ea" /><path d="M22 54l32-24v25H22z" fill="#0f7bd0" />
    <rect x="8" y="24" width="24" height="25" rx="3" fill="#0f6cbd" />
    <ellipse cx="20" cy="36.500" rx="6" ry="7" fill="none" stroke="#fff" strokeWidth="3" />
  </Ico>
);
const VSCode = ({ size = 64 }: { size?: number }) => (
  <Ico w={size} h={size + 1} vb="0 0 64 65">
    <rect width="64" height="65" rx="13" fill="#fff" />
    <path d="M45 9l11 5v37l-11 5-20-21-11 9-5-3V24l5-2 11 8z" fill="#0e7ad1" />
    <path d="M45 22L31 33l14 11z" fill="#fff" /><path d="M45 9l11 5v37l-11 5z" fill="#2a99e8" />
    <path d="M14 26l7 6.500-7 6.500z" fill="#fff" />
  </Ico>
);
const Slack = () => (
  <Ico>
    <rect width="64" height="65" rx="13" fill="#fff" />
    <g strokeWidth="9" strokeLinecap="round" fill="none">
      <path d="M24 26H14M26 14v0" stroke="#36c5f0" /><path d="M38 14v12M50 26h0" stroke="#2eb67d" />
      <path d="M38 39h12M38 51v0" stroke="#ecb22e" /><path d="M26 39v12M14 39h0" stroke="#e01e5a" />
    </g>
  </Ico>
);
const ZoomApp = () => (
  <Ico w={70} h={71} vb="0 0 70 71">
    <rect width="70" height="71" rx="18" fill="#3b83f6" />
    <rect x="13" y="23" width="30" height="26" rx="5" fill="#fff" /><path d="M46 33l11-9v24l-11-9z" fill="#fff" />
  </Ico>
);
const Folder = () => (
  <Ico w={74} h={62} vb="0 0 74 62">
    <path d="M0 8a6 6 0 0 1 6-6h20l8 6h36a4 4 0 0 1 4 4v10H0z" fill="#2aa3df" />
    <rect y="12" width="74" height="50" rx="5" fill="#5cc8fb" />
  </Ico>
);
const JpegDoc = () => (
  <Ico w={54} h={72} vb="0 0 54 72">
    <path d="M0 0h36l18 20v52H0z" fill="#f1f1f1" /><path d="M36 0l18 20H36z" fill="#d9d9d9" />
    <rect x="13" y="20" width="28" height="30" rx="6" fill="#b8cce0" />
    <rect x="24" y="34" width="16" height="16" rx="2" fill="#333" />
    <text x="27" y="66" textAnchor="middle" fontFamily="Liberation Sans" fontSize="11" fill="#888">JPEG</text>
  </Ico>
);
const PicThumb = () => (
  <Ico w={68} h={40} vb="0 0 68 40">
    <rect width="68" height="40" fill="#f4f4f4" />
    <rect x="3" y="3" width="62" height="34" fill="#0d3244" />
    <path d="M28 37c4-14 20-22 37-23v23z" fill="#071a26" />
    <path d="M12 37l6-14 6 14zM6 37l4-10 4 10z" fill="#e8f4f2" />
    <path d="M16 32l5-16 5 16z" fill="#3fb8b0" />
  </Ico>
);
const ChromeThumb = () => (
  <Ico w={75} h={42} vb="0 0 75 42">
    <rect width="75" height="42" fill="#fff" /><rect width="75" height="4" fill="#27296d" /><rect y="4" width="75" height="4" fill="#d8d8e0" />
    <path d="M6 14h30M6 19h62M6 23h62M6 27h58M6 31h62M6 35h50" stroke="#aaa" strokeWidth="1" />
  </Ico>
);
const SafariThumb = () => (
  <Ico w={75} h={48} vb="0 0 75 48">
    <rect width="75" height="48" fill="#3b3b3b" /><rect x="14" y="5" width="61" height="43" fill="#fff" />
    <path d="M20 10h12M20 15h16M20 20h10M20 25h18M20 30h14M20 35h18M20 40h10" stroke="#888" strokeWidth="1" />
  </Ico>
);
const NotesThumb = () => (
  <Ico w={74} h={49} vb="0 0 74 49">
    <rect width="74" height="49" fill="#3a3a3a" /><rect x="16" width="58" height="49" fill="#262626" />
    <path d="M20 6h18M20 13h16M20 20h18M20 27h16M20 34h18M40 16h30" stroke="#888" strokeWidth="1" />
  </Ico>
);
const FinderThumb = () => (
  <Ico w={74} h={36} vb="0 0 74 36">
    <rect width="74" height="36" fill="#2c2c2c" /><rect width="12" height="36" fill="#3a3a3a" />
    {[20, 32, 44, 56].map(x => <rect key={x} x={x} y="12" width="7" height="7" fill="#eee" />)}
  </Ico>
);
const CodeThumb = () => (
  <Ico w={74} h={56} vb="0 0 74 56">
    <rect width="74" height="56" fill="#0b2233" />
    <path d="M6 8h12M6 13h10M6 18h14M24 8h20M24 13h26M24 18h18M24 23h28M24 28h20" stroke="#5a8fb0" strokeWidth="1" />
    <path d="M24 36h34M24 40h30M24 44h36M24 48h26" stroke="#aac" strokeWidth="1" />
  </Ico>
);
const Trash = () => (
  <Ico w={60} h={74} vb="0 0 60 74">
    <defs><linearGradient id="tr" x1="0" y1="0" x2="1" y2="0"><stop offset="0" stopColor="#6e6e6e" /><stop offset=".5" stopColor="#a5a5a5" /><stop offset="1" stopColor="#5c5c5c" /></linearGradient></defs>
    <path d="M3 18h54l-7 50c-1 4-3 6-10 6H20c-7 0-9-2-10-6z" fill="url(#tr)" />
    <path d="M6 18c4-10 8-12 14-16 6 4 8 2 12 0 6 2 14 8 22 16z" fill="#e4e4e4" />
    <path d="M22 8l6 8M34 6l4 10" stroke="#5a90c0" strokeWidth="3" />
  </Ico>
);

const tabs = [
  { title: "Students Project: eCommerce", fav: <DocFav />, fade: true, sep: true },
  { title: "DCF Guided Inquiry - Content", fav: <DocFav />, fade: true, sep: true },
  { title: "Cfisher2021/Ecommers-", fav: <GithubFav />, sep: true },
  { title: "Showing results for contents", fav: <NuFav />, fade: true },
  { title: "W3C CSS Validator results for", fav: <W3Fav />, fade: true, active: true },
  { title: "Home", fav: <HomeFav />, sep: true },
];

type DockItem = { w: number; node: React.ReactNode; dot?: boolean; count?: string; mt?: number; mr?: number; badge?: React.ReactNode };
const apps: DockItem[] = [
  { w: 64, node: <Finder />, dot: true },
  { w: 64, node: <Launchpad /> },
  { w: 64, node: <Safari />, dot: true },
  { w: 64, node: <Chrome />, dot: true },
  { w: 64, node: <Messages />, count: "35" },
  { w: 64, node: <Mail />, dot: true, count: "16,883" },
  { w: 64, node: <Maps /> },
  { w: 64, node: <Photos /> },
  { w: 64, node: <FaceTime /> },
  { w: 64, node: <Calendar /> },
  { w: 64, node: <Reminders /> },
  { w: 64, node: <Contacts /> },
  { w: 64, node: <Notes />, dot: true },
  { w: 64, node: <TV /> },
  { w: 64, node: <Music /> },
  { w: 64, node: <Podcasts /> },
  { w: 64, node: <News /> },
  { w: 64, node: <AppStore /> },
  { w: 64, node: <Settings />, count: "1" },
];
const running: DockItem[] = [
  { w: 64, node: <Outlook />, dot: true },
  { w: 64, node: <VSCode />, dot: true },
  { w: 64, node: <Slack />, dot: true, mr: -3 },
  { w: 70, node: <ZoomApp />, dot: true, mt: -2 },
];
const docs: DockItem[] = [
  { w: 74, node: <Folder />, mt: 3, mr: 2 },
  { w: 54, node: <JpegDoc />, mt: -2, mr: 3 },
  { w: 68, node: <PicThumb />, mt: 17, mr: -6 },
  { w: 75, node: <ChromeThumb />, mt: 13, mr: -12, badge: <Chrome size={24} /> },
  { w: 75, node: <SafariThumb />, mt: 10, mr: -8, badge: <Safari size={24} /> },
  { w: 74, node: <NotesThumb />, mt: 9, mr: -9, badge: <Notes size={24} /> },
  { w: 75, node: <FinderThumb />, mt: 16, mr: -13, badge: <Finder size={24} /> },
  { w: 76, node: <CodeThumb />, mt: 6, mr: -1, badge: <VSCode size={24} /> },
  { w: 60, node: <Trash />, mt: -5 },
];

const DockSlots = ({ items }: { items: DockItem[] }) => (
  <>
    {items.map((it, i) => (
      <Slot key={i} $w={it.w} $mr={it.mr}>
        <Lift $mt={it.mt}>{it.node}</Lift>
        {it.badge && <ThumbBadge>{it.badge}</ThumbBadge>}
        {it.count && <Count>{it.count}</Count>}
        {it.dot && <Dot />}
      </Slot>
    ))}
  </>
);

export default function App() {
  return (
    <Root>
      <Global />
      <MenuBar>
        <MenuItems>
          <Apple />
          <MenuName $bold>Chrome</MenuName>
          {["File", "Edit", "View", "History", "Bookmarks", "Profiles", "Tab", "Window", "Help"].map(m => (
            <MenuName key={m}>{m}</MenuName>
          ))}
        </MenuItems>
        <Status>
          <ZoomStatus />
          <ScribbleStatus />
          <BatteryStatus />
          <WifiStatus />
          <Search size={28} color="#f1f2f4" strokeWidth={2.4} />
          <ControlStatus />
          <SiriStatus />
          <Clock>{"Wed Dec 15  11:15 PM"}</Clock>
        </Status>
      </MenuBar>

      <Window>
        <TabStrip>
          <Lights>
            <Light $c="#ff5f57" />
            <Light $c="#febc2e" />
            <Light $c="#2bc840" />
          </Lights>
          {tabs.map(t => (
            <Tab key={t.title} $active={t.active} $sep={t.sep}>
              {t.fav}
              <TabTitle $fade={t.fade}>{t.title}</TabTitle>
              <X size={26} strokeWidth={2.6} />
            </Tab>
          ))}
          <NewTab><Plus size={30} strokeWidth={3} /></NewTab>
          <TabMenu><ChevronDown size={26} strokeWidth={2.6} /></TabMenu>
        </TabStrip>

        <Toolbar>
          <NavButtons>
            <ArrowLeft size={32} color="#fff" strokeWidth={2.4} />
            <ArrowRight size={32} color="#8790cf" strokeWidth={2.4} />
            <RotateCw size={30} color="#fff" strokeWidth={2.4} />
          </NavButtons>
          <Omnibox>
            <Lock size={20} color="#a9abb8" fill="#a9abb8" />
            <Host>jigsaw.w3.org</Host>/css-validator/validator
            <OmniIcons>
              <ShareIcon />
              <Star size={30} strokeWidth={2.4} />
            </OmniIcons>
          </Omnibox>
          <Avatar><Face /></Avatar>
          <UpdatePill>
            Update
            <Kebab><i /><i /><i /></Kebab>
          </UpdatePill>
        </Toolbar>

        <Page>
          <Banner>
            <Logo>
              <LogoBlue>W3</LogoBlue><LogoBlack>C</LogoBlack>
              <LogoMark>®</LogoMark>
            </Logo>
            <BannerText>
              <BannerTitle>The W3C CSS Validation Service</BannerTitle>
              <BannerSub>W3C CSS Validator results for TextArea (CSS level 3 + SVG)</BannerSub>
            </BannerText>
          </Banner>

          <JumpNav>
            <JumpLabel>Jump to:</JumpLabel>
            <JumpLink>Errors (2)</JumpLink>
            <JumpLink>Warnings (1)</JumpLink>
            <JumpLink>Validated CSS</JumpLink>
          </JumpNav>

          <H2>W3C CSS Validator results for TextArea (CSS level 3 + SVG)</H2>

          <ErrorBar>Sorry! We found the following errors (2)</ErrorBar>
          <UriRow>URI : TextArea</UriRow>
          <Row>
            <LineNo>124</LineNo>
            <Gap />
            <Msg>
              <Code>circle</Code>is not a<Code>text-rendering</Code>value :<Code>circle</Code>
            </Msg>
          </Row>
          <Row>
            <LineNo>192</LineNo>
            <Gap />
            <Msg>
              Value Error : background-color<Code>linear-gradient(90deg, #b13e8b, #372056)</Code>is not a<Code>background-color</Code>value :<Code>linear-gradient(90deg, #b13e8b, #372056)</Code>
            </Msg>
          </Row>
          <Rule />
          <Top>↑ TOP</Top>

          <Promo>
            <BadgeBox><FrontEndBadge /></BadgeBox>
            <PromoText>
              Interested in “developing” your developer skills? In W3Cx’s hands-on Professional Certificate Program, learn how to code the right way by creating
              <br />
              Web sites and apps that use the latest Web standards. <A>Find out more!</A>
              <Blank />
              <A>Donate</A> and help us build better tools for a better web.
            </PromoText>
          </Promo>

          <H3 $top={43}>Warnings (1)</H3>
          <UriRow $top={34}>URI : TextArea</UriRow>
          <Row $warn>
            <LineNo>125</LineNo>
            <Gap />
            <Flag />
            <Msg $warn>
              <Code>-webkit-text-security</Code>is a vendor extension
            </Msg>
          </Row>
          <Rule />
          <Top>↑ TOP</Top>

          <H3 $top={31}>Valid CSS information</H3>
          <Listing>{"body {\n  padding : 0;"}</Listing>
        </Page>
      </Window>

      <DockArea>
        <Dock>
          <DockSlots items={apps} />
          <Divider $ml={10} $mr={8} />
          <DockSlots items={running} />
          <Divider $ml={6} $mr={2} />
          <DockSlots items={docs} />
        </Dock>
      </DockArea>
    </Root>
  );
}
